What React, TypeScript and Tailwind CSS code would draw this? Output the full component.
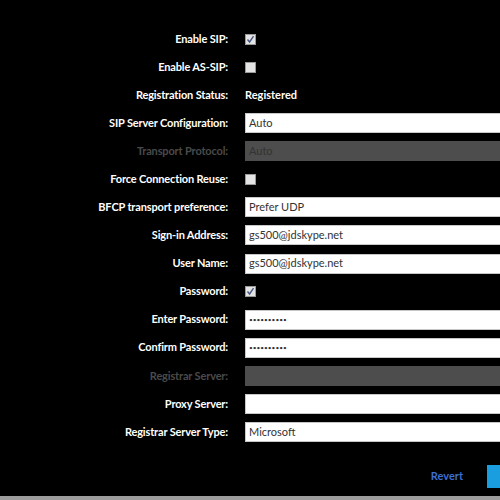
import React from "react";

// SIP settings form (dark theme)
type Row =
  | { label: string; kind: "check"; checked: boolean }
  | { label: string; kind: "text"; value: string }
  | { label: string; kind: "input"; value: string; disabled?: boolean; password?: boolean };

const ROWS: Row[] = [
  { label: "Enable SIP:", kind: "check", checked: true },
  { label: "Enable AS-SIP:", kind: "check", checked: false },
  { label: "Registration Status:", kind: "text", value: "Registered" },
  { label: "SIP Server Configuration:", kind: "input", value: "Auto" },
  { label: "Transport Protocol:", kind: "input", value: "Auto", disabled: true },
  { label: "Force Connection Reuse:", kind: "check", checked: false },
  { label: "BFCP transport preference:", kind: "input", value: "Prefer UDP" },
  { label: "Sign-in Address:", kind: "input", value: "gs500@jdskype.net" },
  { label: "User Name:", kind: "input", value: "gs500@jdskype.net" },
  { label: "Password:", kind: "check", checked: true },
  { label: "Enter Password:", kind: "input", value: "••••••••••", password: true },
  { label: "Confirm Password:", kind: "input", value: "••••••••••", password: true },
  { label: "Registrar Server:", kind: "input", value: "", disabled: true },
  { label: "Proxy Server:", kind: "input", value: "" },
  { label: "Registrar Server Type:", kind: "input", value: "Microsoft" },
];

const Checkbox = ({ checked }: { checked: boolean }) => (
  <div className="w-[11px] h-[11px] border border-[#9a9a9a] bg-[#e4e4e4] flex items-center justify-center">
    {checked && (
      <svg width="9" height="9" viewBox="0 0 9 9">
        <path d="M1.5 4.5 L3.6 7 L7.5 1.2" fill="none" stroke="#4a5a86" strokeWidth="1.4" />
      </svg>
    )}
  </div>
);

export default function App() {
  return (
    <div
      className="w-[500px] h-[500px] bg-black overflow-hidden flex flex-col text-[11px]"
      style={{ fontFamily: "Lato, 'Open Sans', sans-serif" }}
    >
      <div className="pt-[25px] flex flex-col">
        {ROWS.map((row) => {
          const dim = row.kind === "input" && row.disabled;
          return (
            <div key={row.label} className="h-[28.07px] flex items-center">
              <div
                className={`w-[228px] shrink-0 text-right font-bold tracking-[-0.15px] ${dim ? "text-[#4a4a4a]" : "text-white"}`}
              >
                {row.label}
              </div>
              <div className="ml-[17px] flex-1 flex items-center">
                {row.kind === "check" && <Checkbox checked={row.checked} />}
                {row.kind === "text" && <span className="text-white font-bold">{row.value}</span>}
                {row.kind === "input" && (
                  <div
                    className={`w-[270px] h-[20px] flex items-center px-[3px] border ${
                      row.disabled
                        ? "bg-[#4d4d4d] border-[#4d4d4d] text-[#333]"
                        : "bg-white border-[#c8c8c8] text-[#333]"
                    } ${row.password ? "text-[6.5px]" : "text-[11px]"}`}
                  >
                    {row.value}
                  </div>
                )}
              </div>
            </div>
          );
        })}
      </div>

      {/* footer actions */}
      <div className="mt-[19px] h-[23px] flex items-center justify-end">
        <span className="text-[#3b6fd6] text-[11px] font-bold mr-[24px]">Revert</span>
        <div className="w-[13px] h-[23px] bg-[#1b9ee0]" />
      </div>
      <div className="mt-auto h-[4px] bg-[#9c9c9c]" />
    </div>
  );
}
